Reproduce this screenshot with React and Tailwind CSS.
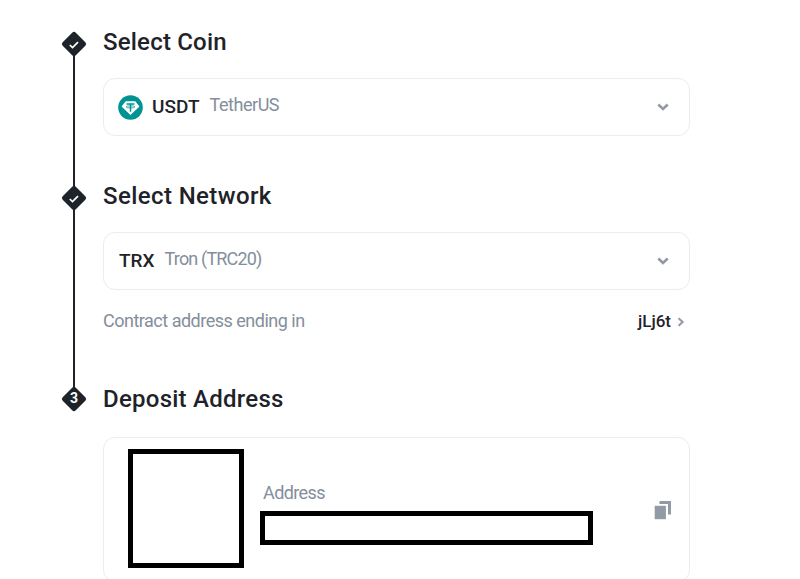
import clsx from "clsx";

const CheckIcon = () => (
  <svg viewBox="0 0 24 24" className="block w-6 h-6" fill="none">
    <path d="M7.8 13l2.7 2.500 5.500-5.400" stroke="#fff" strokeWidth="1.700" />
  </svg>
);

const ChevronDown = () => (
  <svg width="12" height="8" viewBox="0 0 12 8" fill="none" className="shrink-0">
    <path d="M1.3 1.6L6 5.900l4.700-4.300" stroke="#929aa5" strokeWidth="2.700" />
  </svg>
);

const ChevronRight = () => (
  <svg width="8" height="10" viewBox="0 0 8 10" fill="none" className="shrink-0">
    <path d="M1.600 1.200L5.600 5l-4 3.800" stroke="#929aa5" strokeWidth="2.100" />
  </svg>
);

const CopyIcon = () => (
  <svg width="18" height="20" viewBox="0 0 18 20" className="shrink-0" fill="#929aa5">
    <path d="M5.500 1H17v13.500h-3V4H5.500z" />
    <path d="M.7 5.800h11.200v13.400H.7z" />
  </svg>
);

const TetherIcon = () => (
  <svg viewBox="0 0 24 24" className="w-[25px] h-[25px] shrink-0">
    <circle cx="12" cy="12" r="11.800" fill="#009393" />
    <path d="M7.400 6h9.200l4 5-8.600 8.300L3.400 11z" fill="#fff" />
    <path d="M8.200 7.800h7.600v1.500h-3.100v6.700h-1.400V9.300H8.200z" fill="#009393" />
    <ellipse cx="12" cy="11.400" rx="4.200" ry="1" fill="none" stroke="#009393" strokeWidth=".7" />
  </svg>
);

// Diamond marker, shows a check once the step is done
const StepMarker = ({ done, number }) => (
  <div className="relative w-6 h-6 shrink-0">
    <svg viewBox="0 0 24 24" className="absolute inset-0 w-6 h-6 overflow-visible">
      <rect x="2.700" y="2.700" width="18.600" height="18.600" rx="2.600" transform="rotate(45 12 12)" fill="#1e2329" />
    </svg>
    <div className="absolute inset-0 flex justify-center text-white text-[14px] leading-[22px] font-bold">
      {done ? <CheckIcon /> : number}
    </div>
  </div>
);

const Step = ({ title, number, done, last, className, titleClass, children }) => (
  <section className={clsx("flex shrink-0", className)}>
    <div className="flex flex-col items-center w-6 shrink-0">
      <StepMarker done={done} number={number} />
      {!last && <div className="w-[2px] flex-1 bg-[#1e2329]" />}
    </div>
    <div className="ml-[17px] w-[587px]">
      <h2 className={clsx("text-[24px] leading-[20px] font-medium whitespace-nowrap", titleClass)}>
        {title}
      </h2>
      {children}
    </div>
  </section>
);

const SelectBox = ({ children }) => (
  <div className="flex items-center h-[58px] pl-[14px] pr-5 border border-[#eaecef] rounded-xl">
    {children}
    <div className="ml-auto">
      <ChevronDown />
    </div>
  </div>
);

export default function App() {
  return (
    <main className="flex flex-col h-[579px] overflow-hidden bg-white pt-8 pl-[62px] font-['Roboto','Liberation_Sans',sans-serif] text-[#1e2329]">
      <Step title="Select Coin" done className="h-[154px]" titleClass="h-[46px] tracking-[0.2px]">
        <SelectBox>
          <TetherIcon />
          <span className="ml-[9px] text-[19px] leading-6 font-medium">USDT</span>
          <span className="ml-[10px] -mt-1 text-[18px] leading-6 text-[#848e9c] tracking-[-0.45px]">TetherUS</span>
        </SelectBox>
      </Step>

      <Step title="Select Network" done className="h-[201px]" titleClass="h-[46px] tracking-[0.4px]">
        <SelectBox>
          <span className="ml-px -mt-px text-[19px] leading-6 font-medium">TRX</span>
          <span className="ml-[10px] -mt-1 text-[18px] leading-6 text-[#848e9c] tracking-[-0.83px]">Tron (TRC20)</span>
        </SelectBox>
        <div className="flex items-center h-6 mt-[19px] pr-[5px]">
          <span className="text-[18px] leading-6 text-[#848e9c] tracking-[-0.5px]">Contract address ending in</span>
          <span className="ml-auto mr-[6px] -mt-px text-[17px] leading-6 font-medium">jLj6t</span>
          <div className="mt-0.5">
            <ChevronRight />
          </div>
        </div>
      </Step>

      <Step title="Deposit Address" number={3} last className="h-[194px]" titleClass="h-12 pt-0.5 mb-0.5 tracking-[0.25px]">
        <div className="flex h-[145px] pl-6 pr-[17px] pt-[11px] border border-[#eaecef] rounded-xl">
          <div className="w-[116px] h-[119px] border-5 border-black" />
          <div className="ml-4 pt-8">
            <div className="ml-[3px] text-[18px] leading-6 text-[#848e9c] tracking-[-0.6px]">Address</div>
            <div className="mt-[6px] w-[333px] h-[34px] border-5 border-black" />
          </div>
          <div className="ml-auto pt-[51px]">
            <CopyIcon />
          </div>
        </div>
      </Step>
    </main>
  );
}
